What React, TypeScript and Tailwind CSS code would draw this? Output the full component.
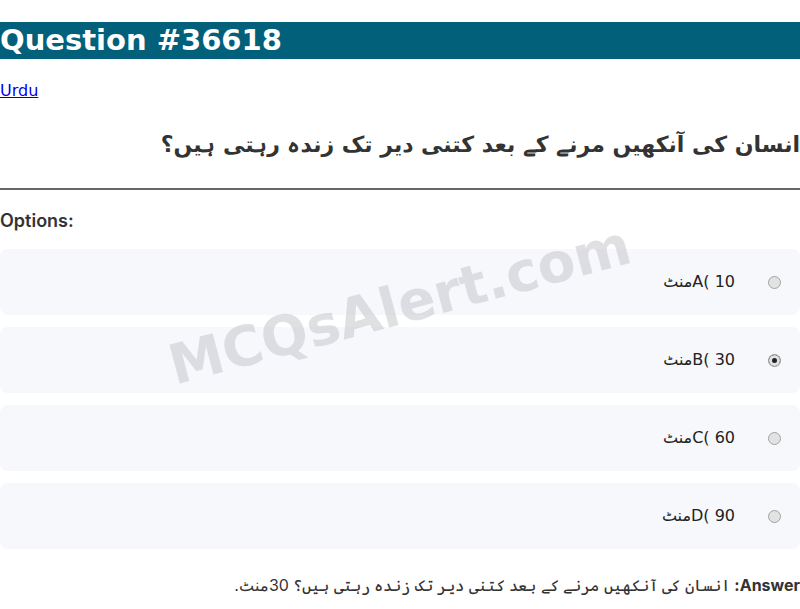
const question = "انسان کی آنکھیں مرنے کے بعد کتنی دیر تک زندہ رہتی ہیں؟";

// visual order on the page: "منٹA( 10"
const options = [
  { key: "A", text: "10 )Aمنٹ", checked: false },
  { key: "B", text: "30 )Bمنٹ", checked: true },
  { key: "C", text: "60 )Cمنٹ", checked: false },
  { key: "D", text: "90 )Dمنٹ", checked: false },
];

export default function App() {
  return (
    <div className="relative min-h-[609px] overflow-hidden bg-white pt-[22px] font-['DejaVu_Sans',sans-serif]">
      <h1 className="bg-[#02607a] text-[29px] font-bold leading-[37px] text-white">Question #36618</h1>

      <a href="#" className="mt-[22px] inline-block text-[16px] leading-[20px] text-[#0000ee] underline">
        Urdu
      </a>

      <h2 dir="rtl" className="mt-[23px] pb-[24px] text-[22px] font-bold leading-[38px] text-[#333]">
        {question}
      </h2>

      <hr className="border-t-2 border-[#666]" />

      <h3 className="mt-[18px] font-['Inter',sans-serif] text-[18px] font-semibold leading-[26px] text-[#333]">
        Options:
      </h3>

      <div className="mt-[15px] flex flex-col gap-[12px]">
        {options.map((o) => (
          <label
            key={o.key}
            dir="rtl"
            className="flex h-[66px] items-center gap-[33px] rounded-[8px] bg-[#f7f8fc] pr-[19px] text-[16px] text-[#222]"
          >
            <input
              type="radio"
              name="opt"
              defaultChecked={o.checked}
              className="h-[13px] w-[13px] appearance-none rounded-full border border-[#a3a3a3] bg-[#e2e2e2] checked:bg-[#222] checked:shadow-[inset_0_0_0_3px_#e2e2e2]"
            />
            <span>{o.text}</span>
          </label>
        ))}
      </div>

      <p dir="rtl" className="mt-[24px] font-['Inter',sans-serif] text-[16px] leading-[24px] text-[#333]">
        <strong className="font-bold">Answer:</strong> {question} 30منٹ.
      </p>

      <div className="pointer-events-none absolute left-0 top-[305px] flex h-0 w-full select-none items-center justify-center">
        <span className="-rotate-[15deg] whitespace-nowrap font-['DejaVu_Sans',sans-serif] text-[55px] font-bold text-[#c6c7cc]/55">
          MCQsAlert.com
        </span>
      </div>
    </div>
  );
}
